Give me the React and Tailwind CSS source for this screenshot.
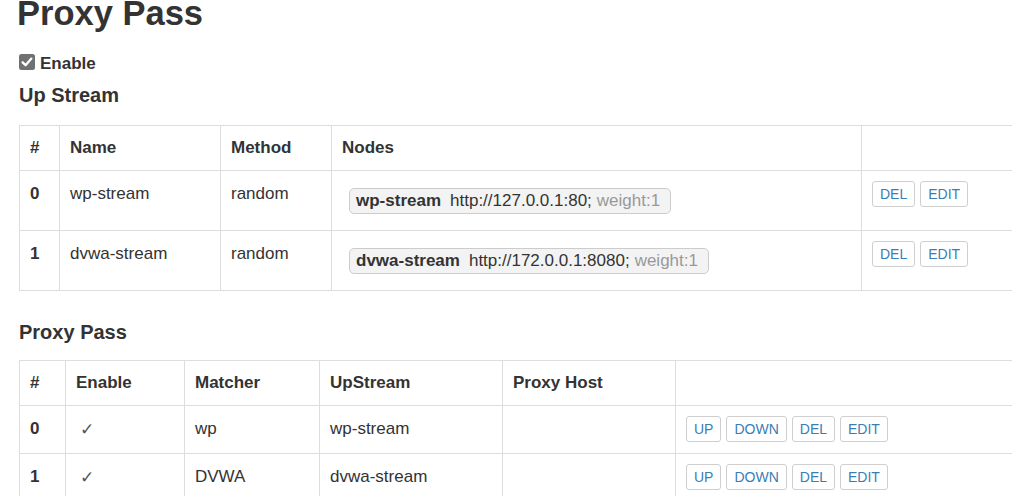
import React from 'react';

// upstream definitions
const upstreams = [
    { id: 0, name: 'wp-stream', method: 'random', url: 'http://127.0.0.1:80;', weight: 'weight:1' },
    { id: 1, name: 'dvwa-stream', method: 'random', url: 'http://172.0.0.1:8080;', weight: 'weight:1' },
];

// proxy pass rules
const passes = [
    { id: 0, enable: true, matcher: 'wp', upstream: 'wp-stream', host: '' },
    { id: 1, enable: true, matcher: 'DVWA', upstream: 'dvwa-stream', host: '' },
];

const Btn = ({ children }) => (
    <button className="h-[26px] px-[7px] text-[14px] leading-[24px] text-[#3b7db5] bg-white border border-[#cfcfcf] rounded-[3px]">
        {children}
    </button>
);

const CheckedBox = () => (
    <svg width="16" height="16" viewBox="0 0 16 16" className="mt-[2px] shrink-0">
        <rect x="0" y="0" width="16" height="16" rx="2.5" fill="#717171" />
        <path d="M3.6 8.3 L6.6 11.2 L12.4 4.6" stroke="#fff" strokeWidth="2.3" fill="none" strokeLinecap="round" strokeLinejoin="round" />
    </svg>
);

const th = 'h-[45px] px-[10px] text-left align-middle font-bold border border-[#dddddd]';
const td = 'px-[10px] align-top border border-[#dddddd]';

const App = () => {
    return (
        <div className="w-[1012px] h-[496px] overflow-hidden bg-white text-[#333333] font-['Liberation_Sans',Arial,sans-serif]">
            <div className="pl-[19px]">
                <h1 className="ml-[-2px] text-[34.5px] leading-[26px] font-bold">Proxy Pass</h1>

                <label className="mt-[26px] flex items-start gap-[5px] h-[24px] text-[17px] leading-[24px] font-bold">
                    <CheckedBox />
                    <span>Enable</span>
                </label>

                <h4 className="mt-[7px] text-[20px] leading-[24px] font-bold">Up Stream</h4>

                {/* --- Up Stream table --- */}
                <table className="mt-[18px] w-[1040px] table-fixed border-collapse text-[17px] leading-[24px]">
                    <thead>
                        <tr>
                            <th className={`${th} w-[40px]`}>#</th>
                            <th className={`${th} w-[161px]`}>Name</th>
                            <th className={`${th} w-[111px]`}>Method</th>
                            <th className={`${th} w-[530px]`}>Nodes</th>
                            <th className={th}></th>
                        </tr>
                    </thead>
                    <tbody>
                        {upstreams.map((u) => (
                            <tr key={u.id} className="h-[60px]">
                                <td className={`${td} pt-[11px] font-bold`}>{u.id}</td>
                                <td className={`${td} pt-[11px]`}>{u.name}</td>
                                <td className={`${td} pt-[11px]`}>{u.method}</td>
                                <td className={`${td} pt-[17px]`}>
                                    <span className="ml-[7px] inline-flex items-center h-[26px] pl-[6px] pr-[10px] bg-[#f3f3f3] border border-[#cccccc] rounded-[5px] leading-[24px] whitespace-nowrap">
                                        <b>{u.name}</b>
                                        <span className="ml-[9px]">{u.url}</span>
                                        <span className="ml-[5px] text-[#999999]">{u.weight}</span>
                                    </span>
                                </td>
                                <td className={`${td} pt-[10px]`}>
                                    <div className="flex gap-[5px]">
                                        <Btn>DEL</Btn>
                                        <Btn>EDIT</Btn>
                                    </div>
                                </td>
                            </tr>
                        ))}
                    </tbody>
                </table>

                <h4 className="mt-[29px] text-[20px] leading-[24px] font-bold">Proxy Pass</h4>

                {/* --- Proxy Pass table --- */}
                <table className="mt-[16px] w-[1040px] table-fixed border-collapse text-[17px] leading-[24px]">
                    <thead>
                        <tr>
                            <th className={`${th} w-[46px]`}>#</th>
                            <th className={`${th} w-[119px]`}>Enable</th>
                            <th className={`${th} w-[135px]`}>Matcher</th>
                            <th className={`${th} w-[183px]`}>UpStream</th>
                            <th className={`${th} w-[173px]`}>Proxy Host</th>
                            <th className={th}></th>
                        </tr>
                    </thead>
                    <tbody>
                        {passes.map((p) => (
                            <tr key={p.id} className="h-[48px]">
                                <td className={`${td} pt-[11px] font-bold`}>{p.id}</td>
                                <td className={`${td} pt-[11px] pl-[14px] text-[#555555] font-['DejaVu_Sans',sans-serif] text-[17px]`}>{p.enable ? '✓' : ''}</td>
                                <td className={`${td} pt-[11px]`}>{p.matcher}</td>
                                <td className={`${td} pt-[11px]`}>{p.upstream}</td>
                                <td className={`${td} pt-[11px]`}>{p.host}</td>
                                <td className={`${td} pt-[10px]`}>
                                    <div className="flex gap-[5px]">
                                        <Btn>UP</Btn>
                                        <Btn>DOWN</Btn>
                                        <Btn>DEL</Btn>
                                        <Btn>EDIT</Btn>
                                    </div>
                                </td>
                            </tr>
                        ))}
                    </tbody>
                </table>
            </div>
        </div>
    );
};

export default App;
